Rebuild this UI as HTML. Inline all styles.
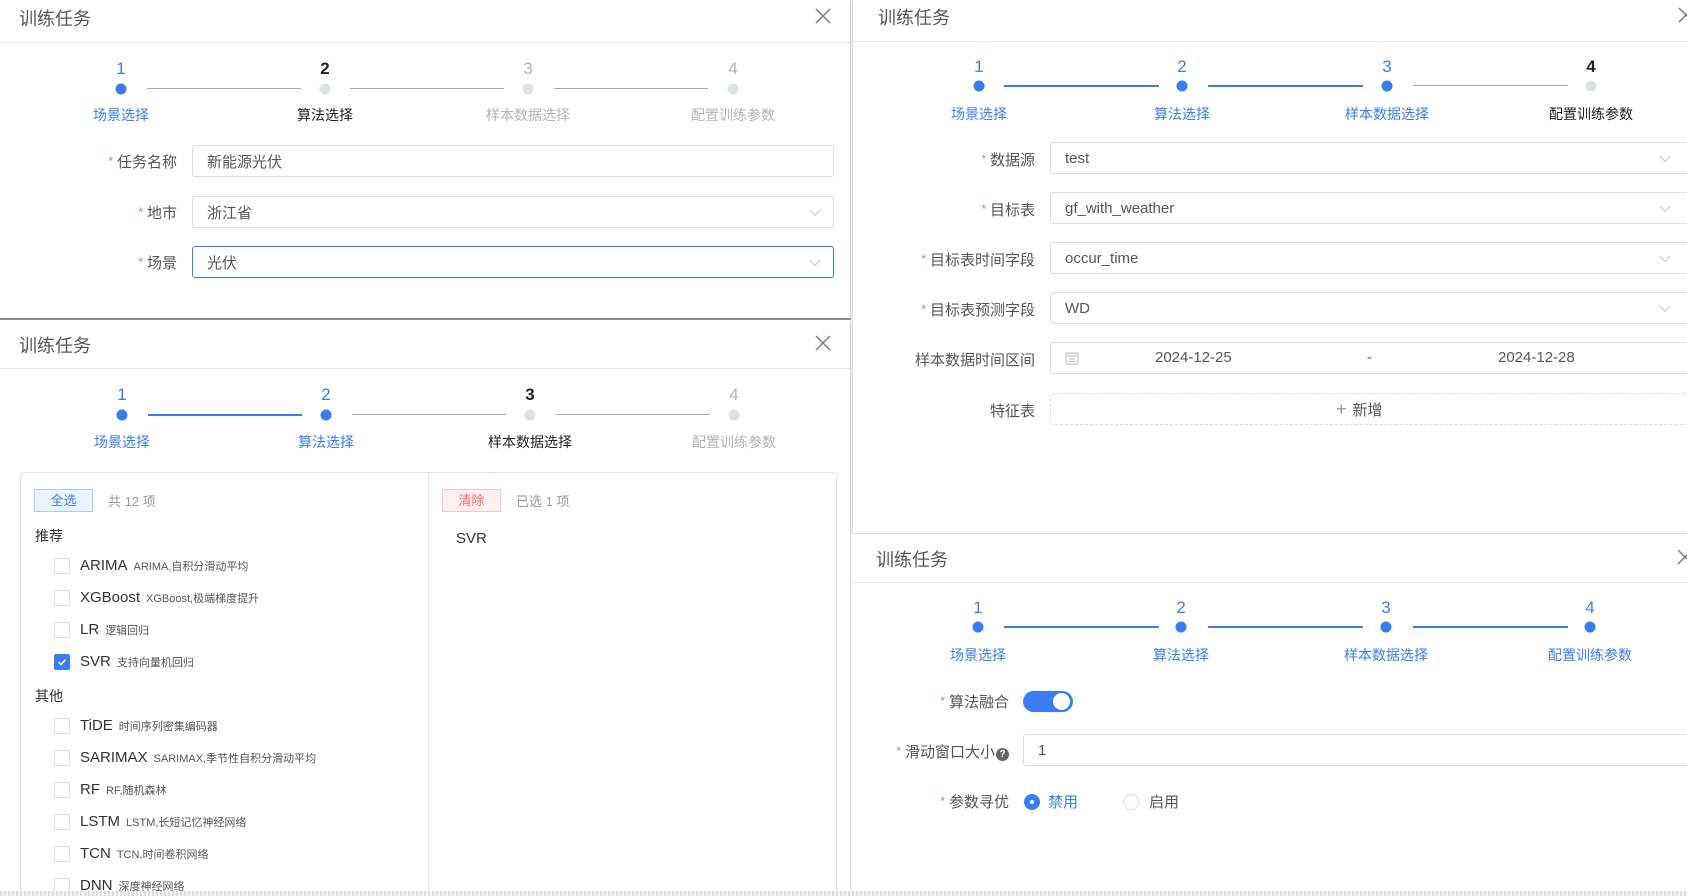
<!DOCTYPE html>
<html><head><meta charset="utf-8"><style>
*{box-sizing:border-box;margin:0;padding:0}
body{width:1687px;height:896px;overflow:hidden;background:#fff;font-family:"Liberation Sans","Noto Sans CJK SC",sans-serif;color:#606266;position:relative}
.p{position:absolute;background:#fff;overflow:hidden}
.a{position:absolute;white-space:nowrap}
.title{font-size:18px;color:#555;font-weight:normal}
.x{position:absolute;width:16px;height:16px}
.hl{position:absolute;height:1px;background:#e8e8e8}
.num{position:absolute;font-size:17px;transform:translateX(-50%)}
.dot{position:absolute;width:11px;height:11px;border-radius:50%;transform:translate(-50%,-50%)}
.ln{position:absolute;height:1px;background:#aaa}
.ln.b{height:2px;background:#3a7cf4}
.lab{position:absolute;font-size:14px;transform:translateX(-50%);white-space:nowrap}
.blue{color:#3a7cf4}.dark{color:#222}.gray{color:#b4b4b4}
.fl{position:absolute;font-size:15px;color:#555;text-align:right;white-space:nowrap}
.fl i{color:#f56c6c;font-style:normal;font-size:12px;margin-right:4px;position:relative;top:-2px}
.inp{position:absolute;border:1px solid #dcdfe6;border-radius:3px;font-size:15px;color:#555;padding-left:14px;display:flex;align-items:center}
.chev{position:absolute;right:14px;top:50%;width:8px;height:8px;border-right:1px solid #c0c4cc;border-bottom:1px solid #c0c4cc;transform:translateY(-70%) rotate(45deg)}
.cb{position:absolute;width:16px;height:16px;border:1px solid #dcdfe6;border-radius:2px;background:#fff}
.it{position:absolute;font-size:15px;color:#333;white-space:nowrap}
.it small{font-size:11px;color:#555;margin-left:6px}
</style></head><body>

<!-- Panel A -->
<div class="p" style="left:0;top:0;width:851px;height:320px;border-right:1px solid #ddd;border-bottom:2px solid #888">
<div class="a title" style="left:19px;top:5px">训练任务</div>
<svg class="x" style="left:815px;top:8px" viewBox="0 0 16 16"><path d="M1 1L15 15M15 1L1 15" stroke="#777" stroke-width="1.4"/></svg>
<div class="hl" style="left:0;top:42px;width:851px"></div>
<div class="num blue" style="left:121px;top:59px">1</div>
<div class="num dark" style="left:325px;top:59px;font-weight:bold">2</div>
<div class="num gray" style="left:528px;top:59px">3</div>
<div class="num gray" style="left:733px;top:59px">4</div>
<div class="dot" style="left:121px;top:89px;background:#3a7cf4"></div>
<div class="dot" style="left:325px;top:89px;background:#dde3e3"></div>
<div class="dot" style="left:528px;top:89px;background:#dde3e3"></div>
<div class="dot" style="left:733px;top:89px;background:#dde3e3"></div>
<div class="ln" style="left:147px;top:88px;width:154px"></div>
<div class="ln" style="left:350px;top:88px;width:154px"></div>
<div class="ln" style="left:554px;top:88px;width:154px"></div>
<div class="lab blue" style="left:121px;top:105px">场景选择</div>
<div class="lab dark" style="left:325px;top:105px">算法选择</div>
<div class="lab gray" style="left:528px;top:105px">样本数据选择</div>
<div class="lab gray" style="left:733px;top:105px">配置训练参数</div>
<div class="fl" style="right:673px;top:151px"><i>*</i>任务名称</div>
<div class="inp" style="left:192px;top:145px;width:642px;height:32px">新能源光伏</div>
<div class="fl" style="right:673px;top:202px"><i>*</i>地市</div>
<div class="inp" style="left:192px;top:196px;width:642px;height:32px">浙江省<span class="chev"></span></div>
<div class="fl" style="right:673px;top:252px"><i>*</i>场景</div>
<div class="inp" style="left:192px;top:246px;width:642px;height:32px;border-color:#3a7cf4">光伏<span class="chev"></span></div>
</div>

<!-- Panel B -->
<div class="p" style="left:0;top:321px;width:851px;height:575px;border-right:1px solid #ddd">
<div class="a title" style="left:19px;top:11px">训练任务</div>
<svg class="x" style="left:815px;top:14px" viewBox="0 0 16 16"><path d="M1 1L15 15M15 1L1 15" stroke="#777" stroke-width="1.4"/></svg>
<div class="hl" style="left:0;top:47px;width:851px"></div>
<div class="num blue" style="left:122px;top:64px">1</div>
<div class="num blue" style="left:326px;top:64px">2</div>
<div class="num dark" style="left:530px;top:64px;font-weight:bold">3</div>
<div class="num gray" style="left:734px;top:64px">4</div>
<div class="dot" style="left:122px;top:94px;background:#3a7cf4"></div>
<div class="dot" style="left:326px;top:94px;background:#3a7cf4"></div>
<div class="dot" style="left:530px;top:94px;background:#dde3e3"></div>
<div class="dot" style="left:734px;top:94px;background:#dde3e3"></div>
<div class="ln b" style="left:148px;top:93px;width:154px"></div>
<div class="ln" style="left:352px;top:93px;width:154px"></div>
<div class="ln" style="left:556px;top:93px;width:154px"></div>
<div class="lab blue" style="left:122px;top:111px">场景选择</div>
<div class="lab blue" style="left:326px;top:111px">算法选择</div>
<div class="lab dark" style="left:530px;top:111px">样本数据选择</div>
<div class="lab gray" style="left:734px;top:111px">配置训练参数</div>
<div class="a" style="left:20px;top:151px;width:817px;height:440px;border:1px solid #e0e3e8;border-radius:4px"></div>
<div class="a" style="left:428px;top:152px;width:1px;height:440px;background:#e6e8eb"></div>
<div class="a" style="left:34px;top:168px;width:59px;height:23px;border:1px solid #a6ccf5;background:#ecf5ff;color:#3a7cf4;font-size:13px;text-align:center;line-height:21px">全选</div>
<div class="a" style="left:108px;top:170px;font-size:13px;color:#999">共 12 项</div>
<div class="a" style="left:442px;top:168px;width:59px;height:23px;border:1px solid #fbc4c4;background:#fef0f0;color:#f56c6c;font-size:13px;text-align:center;line-height:21px">清除</div>
<div class="a" style="left:516px;top:170px;font-size:13px;color:#999">已选 1 项</div>
<div class="it" style="left:456px;top:209px">SVR</div>
<div class="it" style="left:35px;top:205px;font-size:14px">推荐</div>
<div class="cb" style="left:54px;top:237px"></div><div class="it" style="left:80px;top:236px">ARIMA<small>ARIMA,自积分滑动平均</small></div>
<div class="cb" style="left:54px;top:269px"></div><div class="it" style="left:80px;top:268px">XGBoost<small>XGBoost,极端梯度提升</small></div>
<div class="cb" style="left:54px;top:301px"></div><div class="it" style="left:80px;top:300px">LR<small>逻辑回归</small></div>
<div class="cb" style="left:54px;top:333px;background:#3a7cf4;border-color:#3a7cf4"><svg width="14" height="14" viewBox="0 0 14 14" style="position:absolute;left:0;top:0"><path d="M3.5 7L6 9.5L10.5 4.5" stroke="#fff" stroke-width="1.5" fill="none"/></svg></div><div class="it" style="left:80px;top:332px">SVR<small>支持向量机回归</small></div>
<div class="it" style="left:35px;top:365px;font-size:14px">其他</div>
<div class="cb" style="left:54px;top:397px"></div><div class="it" style="left:80px;top:396px">TiDE<small>时间序列密集编码器</small></div>
<div class="cb" style="left:54px;top:429px"></div><div class="it" style="left:80px;top:428px">SARIMAX<small>SARIMAX,季节性自积分滑动平均</small></div>
<div class="cb" style="left:54px;top:461px"></div><div class="it" style="left:80px;top:460px">RF<small>RF,随机森林</small></div>
<div class="cb" style="left:54px;top:493px"></div><div class="it" style="left:80px;top:492px">LSTM<small>LSTM,长短记忆神经网络</small></div>
<div class="cb" style="left:54px;top:525px"></div><div class="it" style="left:80px;top:524px">TCN<small>TCN,时间卷积网络</small></div>
<div class="cb" style="left:54px;top:557px"></div><div class="it" style="left:80px;top:556px">DNN<small>深度神经网络</small></div>
</div>

<!-- Panel C -->
<div class="p" style="left:852px;top:0;width:835px;height:533px;border-left:1px solid #ddd;box-shadow:0 2px 4px rgba(0,0,0,.15)">
<div class="a title" style="left:25px;top:4px">训练任务</div>
<svg class="x" style="left:825px;top:7px" viewBox="0 0 16 16"><path d="M1 1L15 15M15 1L1 15" stroke="#777" stroke-width="1.4"/></svg>
<div class="hl" style="left:0;top:41px;width:835px"></div>
<div class="num blue" style="left:126px;top:57px">1</div>
<div class="num blue" style="left:329px;top:57px">2</div>
<div class="num blue" style="left:534px;top:57px">3</div>
<div class="num dark" style="left:738px;top:57px;font-weight:bold">4</div>
<div class="dot" style="left:126px;top:86px;background:#3a7cf4"></div>
<div class="dot" style="left:329px;top:86px;background:#3a7cf4"></div>
<div class="dot" style="left:534px;top:86px;background:#3a7cf4"></div>
<div class="dot" style="left:738px;top:86px;background:#dde3e3"></div>
<div class="ln b" style="left:151px;top:85px;width:155px"></div>
<div class="ln b" style="left:355px;top:85px;width:155px"></div>
<div class="ln" style="left:560px;top:85px;width:155px"></div>
<div class="lab blue" style="left:126px;top:104px">场景选择</div>
<div class="lab blue" style="left:329px;top:104px">算法选择</div>
<div class="lab blue" style="left:534px;top:104px">样本数据选择</div>
<div class="lab dark" style="left:738px;top:104px">配置训练参数</div>
<div class="fl" style="right:652px;top:149px"><i>*</i>数据源</div>
<div class="inp" style="left:197px;top:142px;width:660px;height:32px">test<span class="chev" style="right:40px"></span></div>
<div class="fl" style="right:652px;top:199px"><i>*</i>目标表</div>
<div class="inp" style="left:197px;top:192px;width:660px;height:32px">gf_with_weather<span class="chev" style="right:40px"></span></div>
<div class="fl" style="right:652px;top:249px"><i>*</i>目标表时间字段</div>
<div class="inp" style="left:197px;top:242px;width:660px;height:32px">occur_time<span class="chev" style="right:40px"></span></div>
<div class="fl" style="right:652px;top:299px"><i>*</i>目标表预测字段</div>
<div class="inp" style="left:197px;top:292px;width:660px;height:32px">WD<span class="chev" style="right:40px"></span></div>
<div class="fl" style="right:652px;top:349px">样本数据时间区间</div>
<div class="inp" style="left:197px;top:342px;width:660px;height:32px">
<svg width="14" height="14" viewBox="0 0 14 14"><rect x="1" y="2" width="12" height="11" fill="none" stroke="#bbb"/><path d="M1 5H13M4 8H10M4 10.5H10" stroke="#bbb"/></svg>
<span class="a" style="left:104px;top:6px">2024-12-25</span><span class="a" style="left:316px;top:6px">-</span><span class="a" style="left:447px;top:6px">2024-12-28</span></div>
<div class="fl" style="right:652px;top:400px">特征表</div>
<div class="inp" style="left:197px;top:393px;width:660px;height:32px;border-style:dashed;justify-content:flex-start;padding-left:285px"><span style="font-size:18px;color:#999;margin-right:6px">+</span>新增</div>
</div>

<!-- Panel D -->
<div class="p" style="left:850px;top:533px;width:837px;height:358px;border-left:1px solid #ddd;border-top:1px solid #ddd">
<div class="a title" style="left:25px;top:12px">训练任务</div>
<svg class="x" style="left:826px;top:15px" viewBox="0 0 16 16"><path d="M1 1L15 15M15 1L1 15" stroke="#777" stroke-width="1.4"/></svg>
<div class="hl" style="left:0;top:48px;width:837px"></div>
<div class="num blue" style="left:127px;top:64px">1</div>
<div class="num blue" style="left:330px;top:64px">2</div>
<div class="num blue" style="left:535px;top:64px">3</div>
<div class="num blue" style="left:739px;top:64px">4</div>
<div class="dot" style="left:127px;top:93px;background:#3a7cf4"></div>
<div class="dot" style="left:330px;top:93px;background:#3a7cf4"></div>
<div class="dot" style="left:535px;top:93px;background:#3a7cf4"></div>
<div class="dot" style="left:739px;top:93px;background:#3a7cf4"></div>
<div class="ln b" style="left:153px;top:92px;width:155px"></div>
<div class="ln b" style="left:357px;top:92px;width:155px"></div>
<div class="ln b" style="left:562px;top:92px;width:155px"></div>
<div class="lab blue" style="left:127px;top:111px">场景选择</div>
<div class="lab blue" style="left:330px;top:111px">算法选择</div>
<div class="lab blue" style="left:535px;top:111px">样本数据选择</div>
<div class="lab blue" style="left:739px;top:111px">配置训练参数</div>
<div class="fl" style="right:678px;top:157px"><i>*</i>算法融合</div>
<div class="a" style="left:172px;top:157px;width:50px;height:21px;border-radius:11px;background:#3a7cf4"><div class="a" style="right:3px;top:2px;width:17px;height:17px;border-radius:50%;background:#fff"></div></div>
<div class="fl" style="right:678px;top:207px"><i>*</i>滑动窗口大小<span style="display:inline-block;width:13px;height:13px;border-radius:50%;background:#666;color:#fff;font-size:10px;text-align:center;line-height:13px;font-weight:bold;margin-left:1px">?</span></div>
<div class="inp" style="left:172px;top:200px;width:700px;height:32px">1</div>
<div class="fl" style="right:678px;top:257px"><i>*</i>参数寻优</div>
<div class="a" style="left:173px;top:260px;width:16px;height:16px;border-radius:50%;background:#3a7cf4"><div class="a" style="left:6px;top:6px;width:4px;height:4px;border-radius:50%;background:#fff"></div></div>
<div class="a" style="left:197px;top:257px;font-size:15px;color:#3a7cf4">禁用</div>
<div class="a" style="left:272px;top:260px;width:16px;height:16px;border-radius:50%;border:1px solid #dcdfe6"></div>
<div class="a" style="left:298px;top:257px;font-size:15px;color:#555">启用</div>
</div>
<div class="a" style="left:0;top:891px;width:1687px;height:5px;background:repeating-linear-gradient(90deg,#ddd 0 2px,#f4f4f4 2px 4px)"></div>
</body></html>
